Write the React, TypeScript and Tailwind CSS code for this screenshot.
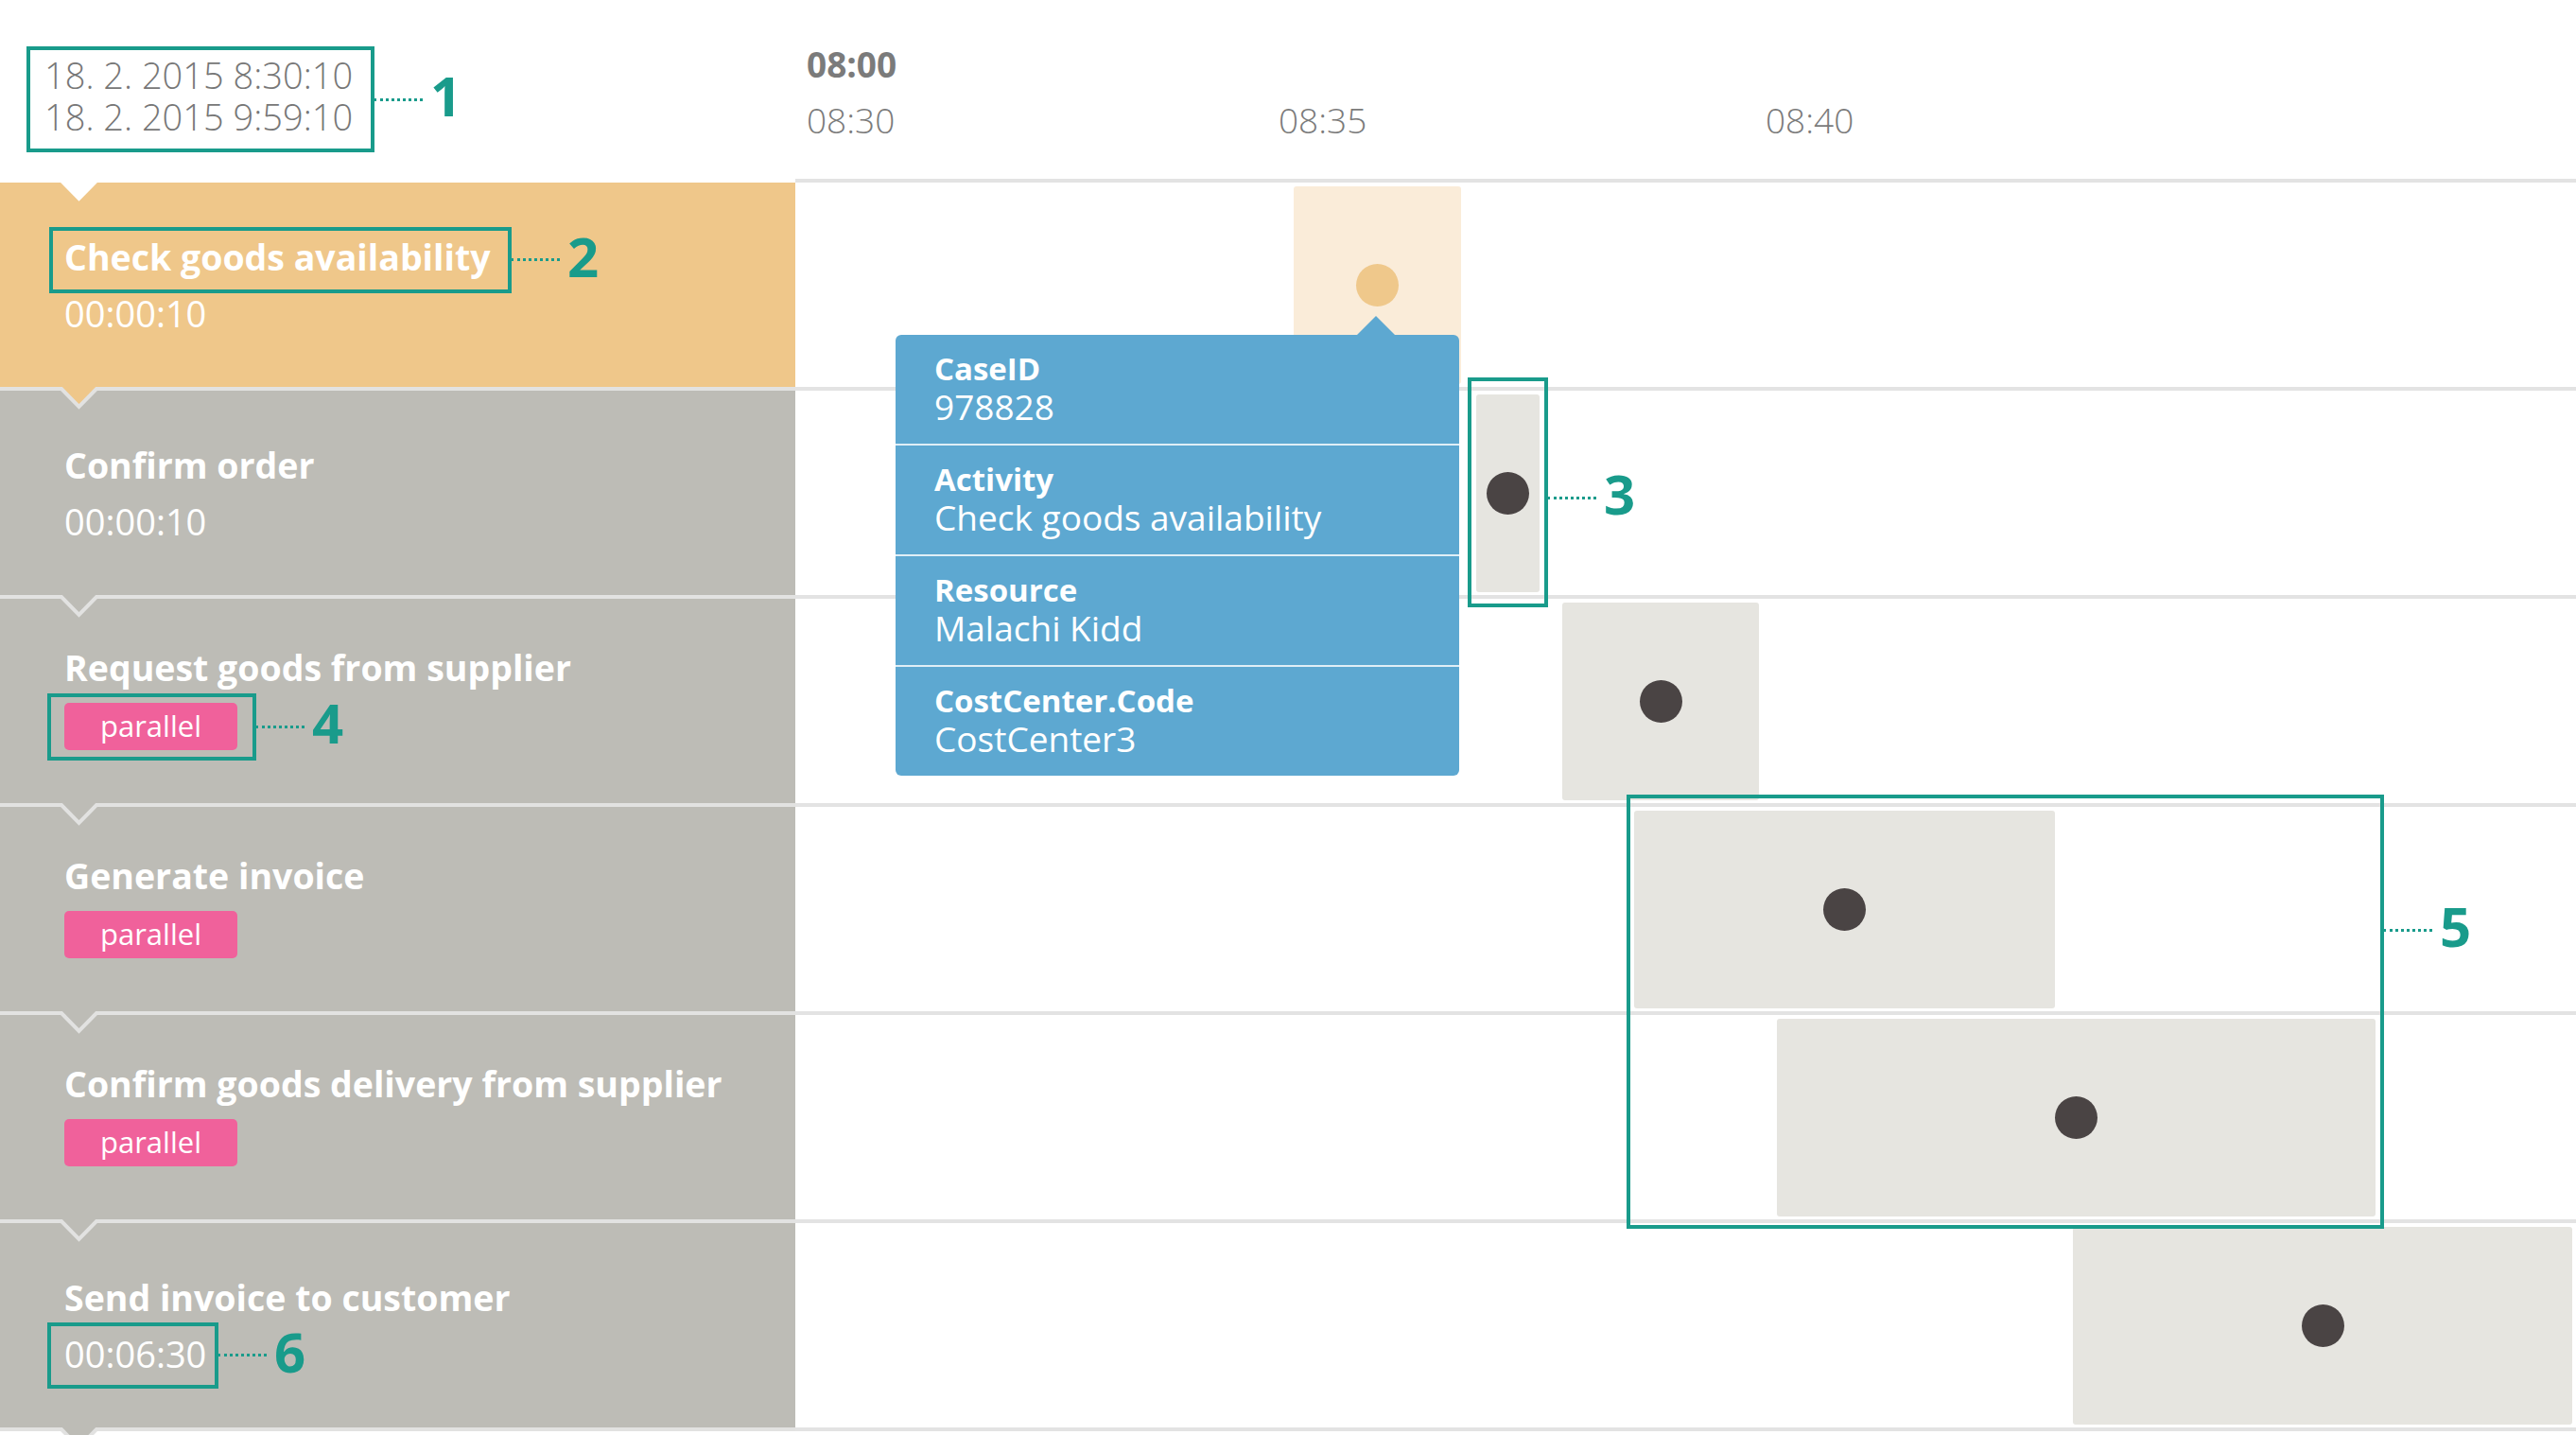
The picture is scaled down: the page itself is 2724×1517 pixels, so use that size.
import type { ReactNode } from "react";

type Row = {
  name: string;
  duration?: string;
  parallel?: boolean;
  left: number;
  width: number;
  active?: boolean;
};

const rows: Row[] = [
  { name: "Check goods availability", duration: "00:00:10", left: 527, width: 177, active: true },
  { name: "Confirm order", duration: "00:00:10", left: 720, width: 67 },
  { name: "Request goods from supplier", parallel: true, left: 811, width: 208 },
  { name: "Generate invoice", parallel: true, left: 887, width: 445 },
  { name: "Confirm goods delivery from supplier", parallel: true, left: 1038, width: 633 },
  { name: "Send invoice to customer", duration: "00:06:30", left: 1351, width: 528 },
];

const tooltip = [
  { label: "CaseID", value: "978828" },
  { label: "Activity", value: "Check goods availability" },
  { label: "Resource", value: "Malachi Kidd" },
  { label: "CostCenter.Code", value: "CostCenter3" },
];

// numbered teal callout drawn over the content
function Callout({ n, box, label = "top-1/2", children }: { n: number; box: string; label?: string; children?: ReactNode }) {
  return (
    <div className="relative self-start">
      {children}
      <div className={`pointer-events-none absolute border-4 border-[#199b8b] ${box}`}>
        <div className={`absolute left-full flex -translate-y-1/2 items-center ${label}`}>
          <span className="ml-[3px] w-[52px] border-t-[3px] border-dotted border-[#199b8b]" />
          <span className="ml-[8px] pb-[8px] text-[58px] font-bold leading-none text-[#199b8b]">{n}</span>
        </div>
      </div>
    </div>
  );
}

function Notch({ fill, stroke }: { fill: string; stroke: string }) {
  return (
    <svg className="absolute -top-[4px] left-[54px]" width="60" height="30" viewBox="0 0 60 30">
      <polygon points="11,0 48,0 48,2 29.5,21 11,2" fill={fill} />
      <polyline points="0,2 11,2 29.5,21 48,2 60,2" fill="none" stroke={stroke} strokeWidth="4" />
    </svg>
  );
}

function ActivityRow({ row, i }: { row: Row; i: number }) {
  const prev = i === 0 ? "#ffffff" : rows[i - 1].active ? "#efc78a" : "#bdbcb6";
  const title = <div className="text-[37.5px] font-bold leading-[48px]">{row.name}</div>;
  const duration = <div className="text-[38px] font-normal leading-[48px]">{row.duration}</div>;
  const badge = (
    <div className="flex h-[50px] w-[183px] items-center justify-center rounded-[5px] bg-[#f0619b] text-[31px] font-normal leading-none">
      parallel
    </div>
  );
  return (
    <div
      className={`relative flex h-[220px] flex-col justify-center border-t-4 pl-[68px] text-white ${
        row.active ? "bg-[#efc78a]" : "bg-[#bdbcb6]"
      } ${i === 0 ? "border-white" : "border-[#e2e2e1]"} ${row.parallel ? "gap-[13px] pb-[8px]" : "gap-[11px]"}`}
    >
      <Notch fill={prev} stroke={i === 0 ? "#ffffff" : "#e2e2e1"} />
      {i === 0 ? (
        <Callout n={2} box="-left-[16px] -top-[8px] h-[70px] w-[489px]">{title}</Callout>
      ) : (
        title
      )}
      {row.duration &&
        (i === 5 ? (
          <Callout n={6} box="-left-[18px] -top-[9px] h-[70px] w-[181px]">{duration}</Callout>
        ) : (
          duration
        ))}
      {row.parallel &&
        (i === 2 ? (
          <Callout n={4} box="-left-[18px] -top-[10px] h-[71px] w-[221px]">{badge}</Callout>
        ) : (
          <div className="self-start">{badge}</div>
        ))}
    </div>
  );
}

function TimelineRow({ row }: { row: Row }) {
  return (
    <div className="relative h-[220px] border-t-4 border-[#e3e3e3]">
      <div
        className={`absolute top-[4px] bottom-[3px] flex items-center justify-center rounded-[3px] ${
          row.active ? "bg-[#faecd9]" : "bg-[#e6e5e0]"
        }`}
        style={{ left: row.left, width: row.width }}
      >
        <div className={`h-[45px] w-[45px] rounded-full ${row.active ? "bg-[#efc88b]" : "bg-[#4a4444]"}`} />
      </div>
    </div>
  );
}

export default function App() {
  return (
    <div className="h-[1517px] w-[2724px] overflow-hidden bg-white font-['Open_Sans',sans-serif]">
      <header className="flex h-[189px]">
        <div className="w-[841px] pl-[47px] pt-[57px]">
          <Callout n={1} box="-left-[19px] -top-[8px] h-[112px] w-[368px]">
            <div className="text-[38px] font-light leading-[44px] text-[#777777]">
              <div>18. 2. 2015 8:30:10</div>
              <div>18. 2. 2015 9:59:10</div>
            </div>
          </Callout>
        </div>
        <div className="flex flex-col gap-[15px] pl-[12px] pt-[46px] text-[37px] leading-[44px] text-[#7b7b7b]">
          <div className="font-bold">08:00</div>
          <div className="flex font-light">
            <span className="w-[499px]">08:30</span>
            <span className="w-[515px]">08:35</span>
            <span>08:40</span>
          </div>
        </div>
      </header>

      <div className="flex">
        <div className="w-[841px]">
          {rows.map((row, i) => (
            <ActivityRow key={row.name} row={row} i={i} />
          ))}
          <div className="relative h-[12px] border-t-4 border-[#e2e2e1]">
            <Notch fill="#bdbcb6" stroke="#e2e2e1" />
          </div>
        </div>

        <div className="relative flex-1">
          {rows.map((row) => (
            <TimelineRow key={row.name} row={row} />
          ))}
          <div className="h-[12px] border-t-4 border-[#e3e3e3]" />

          <div className="absolute left-[711px] top-[210px] h-[243px] w-[85px]">
            <Callout n={3} box="left-0 top-0 h-[243px] w-[85px]" label="top-[123px]" />
          </div>
          <div className="absolute left-[879px] top-[651px] h-[459px] w-[801px]">
            <Callout n={5} box="left-0 top-0 h-[459px] w-[801px]" label="top-[139px]" />
          </div>

          <div className="absolute left-[106px] top-[165px] z-10 flex h-[466px] w-[596px] flex-col rounded-[6px] bg-[#5da8d1] text-white">
            <div className="absolute -top-[20px] left-[488px] h-0 w-0 border-x-[20px] border-b-[20px] border-x-transparent border-b-[#5da8d1]" />
            {tooltip.map((t, i) => (
              <div key={t.label} className={`flex-1 pl-[41px] pt-[17px] ${i > 0 ? "border-t-2 border-white/80" : ""}`}>
                <div className="text-[33px] font-bold leading-[38px]">{t.label}</div>
                <div className="text-[37px] font-normal leading-[41px]">{t.value}</div>
              </div>
            ))}
          </div>
        </div>
      </div>
    </div>
  );
}
